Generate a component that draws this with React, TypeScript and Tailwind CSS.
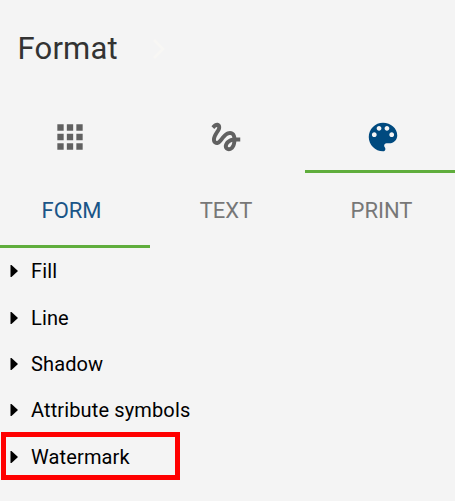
import React from 'react';
import { MdApps, MdGesture } from 'react-icons/md';

const sections = ['Fill', 'Line', 'Shadow', 'Attribute symbols', 'Watermark'];

function PaletteIcon() {
  return (
    <svg width="38" height="38" viewBox="0 0 24 24" fill="currentColor">
      <path d="M12 3c-4.97 0-9 4.03-9 9s4.03 9 9 9c.83 0 1.5-.67 1.5-1.5 0-.39-.15-.74-.39-1.01-.23-.26-.38-.61-.38-.99 0-.83.67-1.5 1.5-1.5H16c2.76 0 5-2.24 5-5 0-4.42-4.03-8-9-8zm-5.5 9c-.83 0-1.5-.67-1.5-1.5S5.67 9 6.5 9 8 9.67 8 10.5 7.33 12 6.5 12zm3-4C8.67 8 8 7.33 8 6.5S8.67 5 9.5 5s1.5.67 1.5 1.5S10.33 8 9.5 8zm5 0c-.83 0-1.5-.67-1.5-1.5S13.67 5 14.5 5s1.5.67 1.5 1.5S15.33 8 14.5 8zm3 4c-.83 0-1.5-.67-1.5-1.5S16.67 9 17.5 9s1.5.67 1.5 1.5-.67 1.5-1.5 1.5z" />
    </svg>
  );
}

function SectionRow({ label, highlighted }: { label: string; highlighted: boolean }) {
  return (
    <li
      className={
        highlighted
          ? 'flex items-center w-[179px] h-[48px] -mt-[1.6px] pt-[2px] ml-px pl-[4px] border-[5px] border-[#ff0000]'
          : 'flex items-center h-[46.4px] pl-[10px]'
      }
    >
      <svg width="8" height="12" viewBox="0 0 8 12" className="shrink-0">
        <path d="M.5 0h1L8 6l-6.5 6h-1z" fill="#000" />
      </svg>
      <span className="ml-[13px] text-[20px] leading-6 tracking-[0.13px] whitespace-nowrap text-black">{label}</span>
    </li>
  );
}

export default function App() {
  return (
    <div className="w-[455px] h-[501px] overflow-hidden bg-[#f4f4f4] font-['Roboto',sans-serif]">
      <header className="flex items-center h-[97px] pl-[17.5px]">
        <h1 className="w-[134.5px] text-[31px] leading-9 tracking-[0.2px] text-[#333]">Format</h1>
        <svg width="13" height="20" viewBox="0 0 13 20" fill="none">
          <path d="M2 1l9 9-9 9" stroke="#f8f7f4" strokeWidth="2.5" />
        </svg>
      </header>

      <nav className="flex h-[76px] pt-[4px] text-[#616161]">
        <button className="flex items-center justify-center w-[150px] pr-[10px]">
          <MdApps size={38} />
        </button>
        <button className="flex items-center justify-center w-[155px] pr-[3px]">
          <MdGesture size={38} />
        </button>
        <button className="flex items-center justify-center w-[150px] pt-[2px] pl-[6px] border-b-3 border-[#5fad3c] text-[#004a7f]">
          <PaletteIcon />
        </button>
      </nav>

      <nav className="flex h-[75px] text-[22px] text-[#777]">
        <button className="w-[150px] pt-[3px] pr-[7px] border-b-3 border-[#5fad3c] text-[#1a5587]">FORM</button>
        <button className="w-[155px] pr-[3px]">TEXT</button>
        <button className="w-[150px] pl-[3px]">PRINT</button>
      </nav>

      <ul>
        {sections.map((label) => (
          <SectionRow key={label} label={label} highlighted={label === 'Watermark'} />
        ))}
      </ul>
    </div>
  );
}
